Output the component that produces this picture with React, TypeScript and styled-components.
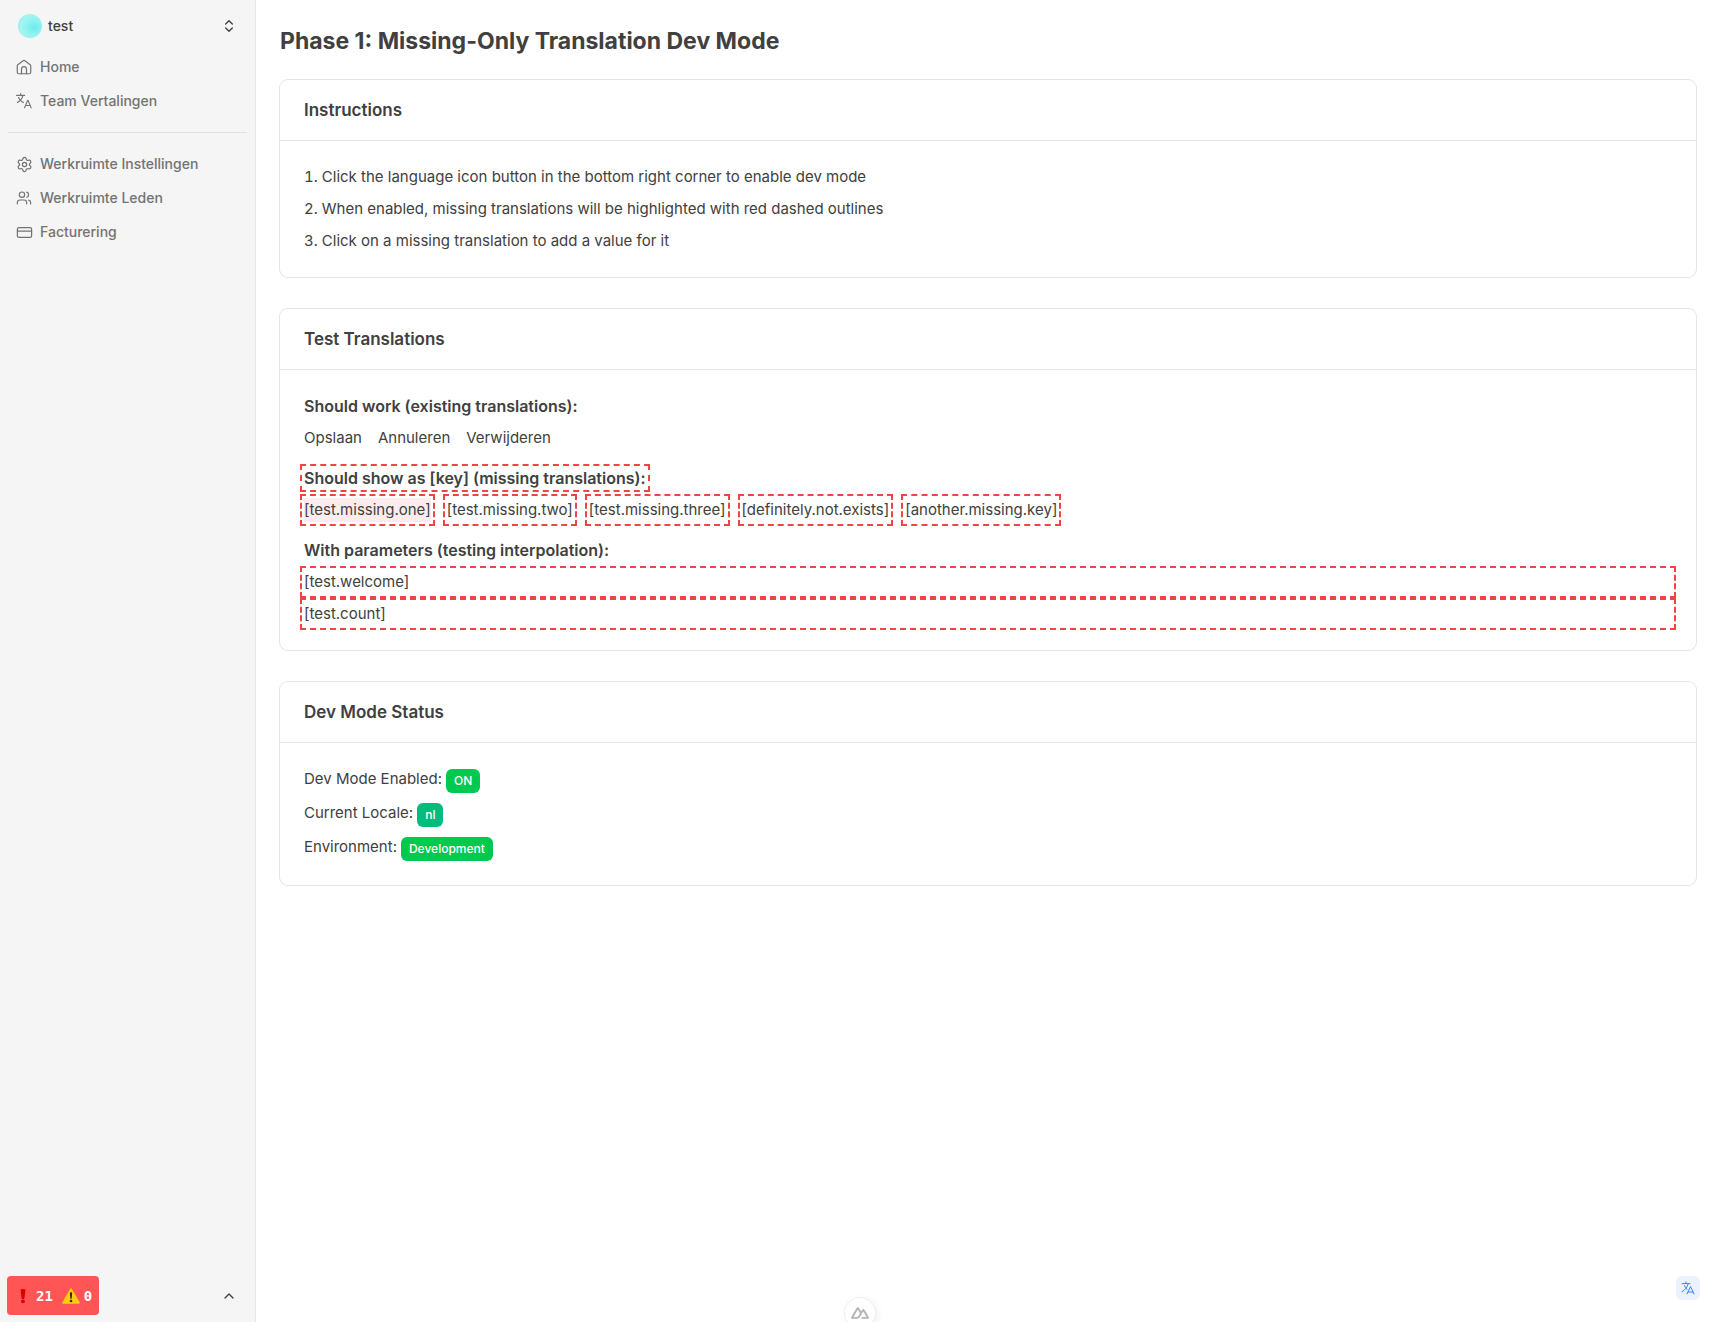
import React from "react";
import styled, { createGlobalStyle } from "styled-components";
import {
  ChevronsUpDown,
  ChevronUp,
  CreditCard,
  Settings,
  Users,
} from "lucide-react";

const sans = `Inter, "Noto Sans", "Liberation Sans", sans-serif`;

const GlobalStyle = createGlobalStyle`
  *, *::before, *::after { box-sizing: border-box; }
  body {
    margin: 0;
    background: #fff;
    color: #404040;
    font: 400 15px/24px ${sans};
    -webkit-font-smoothing: antialiased;
  }
  h1, h2, p, ol, ul { margin: 0; padding: 0; }
  button { font: inherit; color: inherit; border: 0; background: none; padding: 0; cursor: pointer; }
`;

const Shell = styled.div`
  display: flex;
  min-height: 100vh;
`;

const Sidebar = styled.aside`
  display: flex;
  flex: none;
  flex-direction: column;
  width: 256px;
  border-right: 1px solid #e5e5e5;
  background: #f5f5f5;
  font-size: 14px;
  line-height: 20px;
  font-weight: 500;
`;

const SidebarHeader = styled.div`
  padding: 8px 8px 0;
`;

const SidebarFooter = styled.div`
  margin-top: auto;
  padding: 8px;
`;

const MenuButton = styled.button`
  display: flex;
  align-items: center;
  width: 100%;
  height: 36px;
  padding: 0 10px;
  gap: 6px;
  text-align: left;

  svg { margin-left: auto; }
`;

const Avatar = styled.span`
  width: 24px;
  height: 24px;
  border-radius: 50%;
  background: radial-gradient(circle at 68% 55%, #6ceceb 0%, #8ff2f0 35%, #a5f4f2 65%, #7deeed 100%);
`;

const Nav = styled.nav`
  padding: 7px 8px 0;
`;

const NavList = styled.ul`
  display: flex;
  flex-direction: column;
  gap: 2px;
  list-style: none;

  & + & {
    margin-top: 15px;
    padding-top: 15px;
    border-top: 1px solid #e0e0e0;
  }
`;

const NavLink = styled.a`
  display: flex;
  align-items: center;
  gap: 7px;
  height: 32px;
  padding: 0 7px;
  color: #737373;
  text-decoration: none;
`;

const NavIcon = styled.span`
  display: grid;
  place-items: center;
  width: 18px;
  height: 18px;
`;

const Main = styled.main`
  flex: 1;
  min-width: 0;
  padding: 24px;
`;

const PageTitle = styled.h1`
  margin-bottom: 22px;
  font-size: 23px;
  line-height: 34px;
  font-weight: 700;
`;

const Cards = styled.div`
  display: flex;
  flex-direction: column;
  gap: 32px;
`;

const Card = styled.section`
  border-radius: 8px;
  background: #fff;
  box-shadow: 0 0 0 1px #e5e5e5;
`;

const CardHeader = styled.h2`
  padding: 16px 24px;
  font-size: 17px;
  line-height: 28px;
  font-weight: 600;
`;

const CardBody = styled.div<{ $gap?: number }>`
  display: flex;
  flex-direction: column;
  gap: ${(p) => p.$gap ?? 8}px;
  padding: 24px;
  border-top: 1px solid #e5e5e5;
`;

const Steps = styled.ol`
  display: flex;
  flex-direction: column;
  gap: 8px;
  list-style: decimal inside;
`;

const Group = styled.div`
  display: flex;
  flex-direction: column;
  gap: 8px;
`;

const Row = styled.div`
  display: flex;
  flex-wrap: wrap;
  gap: 16px;
`;

const Label = styled.p`
  font-size: 16px;
`;

const Strong = styled.strong`
  font-weight: 600;
`;

const missing = `
  outline: 2px dashed #ef4444;
  outline-offset: 2px;
  cursor: pointer;
`;

const MissingStrong = styled(Strong)`
  ${missing}
`;

const Missing = styled.span<{ $active?: boolean }>`
  ${missing}
  background: ${(p) => (p.$active ? "rgba(239, 68, 68, 0.1)" : "transparent")};
`;

const StatusRow = styled.div`
  display: flex;
  gap: 4px;
  height: 26px;
`;

const Badge = styled.span<{ $color: string }>`
  align-self: flex-end;
  padding: 4px 8px;
  border-radius: 6px;
  background: ${(p) => p.$color};
  color: #fff;
  font-size: 12px;
  line-height: 16px;
  font-weight: 500;
`;

const IssueCounter = styled.button`
  position: fixed;
  left: 7px;
  bottom: 7px;
  display: flex;
  align-items: center;
  height: 39px;
  padding: 0 7px 0 12px;
  border-radius: 4px;
  background: #ff5555;
  color: #fff;
  font: 700 14px/20px "DejaVu Sans Mono", monospace;
  gap: 9px;
`;

const Count = styled.span<{ $gap: number }>`
  display: flex;
  align-items: center;
  gap: ${(p) => p.$gap}px;
`;

const DevModeToggle = styled.button`
  position: fixed;
  right: 20px;
  bottom: 22px;
  display: grid;
  place-items: center;
  width: 24px;
  height: 24px;
  border-radius: 6px;
  background: #ebf2fe;
  color: #3b82f6;
`;

const DevtoolsHandle = styled.button`
  position: fixed;
  left: 50%;
  bottom: -6px;
  display: grid;
  place-items: center;
  width: 30px;
  height: 30px;
  margin-left: -15px;
  border-radius: 50%;
  background: #fff;
  color: #b4b4b4;
  box-shadow: 0 0 0 1px #f0f0f0, 2px 2px 8px rgba(0, 0, 0, 0.08);
`;

const HomeIcon = () => (
  <svg width="18" height="18" viewBox="0 0 24 24" fill="none" stroke="currentColor" strokeWidth="1.6" strokeLinecap="round" strokeLinejoin="round" aria-hidden="true">
    <path d="M3 10.5a2 2 0 0 1 .8-1.6l7-5.3a2 2 0 0 1 2.4 0l7 5.3a2 2 0 0 1 .8 1.6V19a2 2 0 0 1-2 2H5a2 2 0 0 1-2-2z" />
    <path d="M8.7 21v-6.2a3.3 3.3 0 0 1 6.6 0V21" />
  </svg>
);

const TranslateIcon = () => (
  <svg width="18" height="18" viewBox="0 0 32 32" fill="currentColor" aria-hidden="true">
    <path d="M27.85 29H30l-6-15h-2.35l-6 15h2.15l1.6-4h6.85zM20.2 23l2.62-6.56L25.45 23zM18 7V5h-7V2H9v3H2v2h10.74a14.71 14.71 0 0 1-3.19 6.18A13.5 13.5 0 0 1 7.26 9H5.16a16.47 16.47 0 0 0 3 5.58A16.84 16.84 0 0 1 3 18l.75 1.86A18.47 18.47 0 0 0 9.53 16a16.92 16.92 0 0 0 5.76 3.84L16 18a14.48 14.48 0 0 1-5.12-3.37A17.64 17.64 0 0 0 14.8 7z" />
  </svg>
);

const LanguageIcon = () => (
  <svg width="16" height="16" viewBox="0 0 24 24" fill="none" stroke="currentColor" strokeWidth="1.5" strokeLinecap="round" strokeLinejoin="round" aria-hidden="true">
    <path d="m10.5 21 5.25-11.25L21 21m-9-3h7.5M3 5.621a48.474 48.474 0 0 1 6-.371m0 0c1.12 0 2.233.038 3.334.114M9 5.25V3m3.334 2.364C11.176 10.658 7.69 15.08 3 17.502m9.334-12.138c.896.061 1.785.147 2.666.257m-4.589 8.495a18.023 18.023 0 0 1-3.827-5.802" />
  </svg>
);

const ExclamationIcon = () => (
  <svg width="8" height="16" viewBox="0 0 8 16" aria-hidden="true">
    <path d="M1.5 1.6Q1.5 1 4 1t2.5.6L5.4 10.6Q4 11.6 2.6 10.6Z" fill="#d90000" />
    <circle cx="4" cy="13.3" r="1.9" fill="#d90000" />
  </svg>
);

const WarningIcon = () => (
  <svg width="18" height="16" viewBox="0 0 18 16" aria-hidden="true">
    <path d="M8.1.9Q9-.4 9.9.9L17.6 14Q18.2 15.6 16.8 15.7H1.2Q-.2 15.6.4 14Z" fill="#ffcc14" />
    <path d="M7.8 4.6Q9 3.8 10.2 4.6L9.7 10.6Q9 11.2 8.3 10.6Z" fill="#3a2b05" />
    <circle cx="9" cy="13" r="1.3" fill="#3a2b05" />
  </svg>
);

const NuxtIcon = () => (
  <svg width="18" height="18" viewBox="0 0 24 24" fill="currentColor" aria-hidden="true">
    <path d="M13.464 19.83h8.922c.283 0 .562-.073.807-.21a1.6 1.6 0 0 0 .591-.574 1.53 1.53 0 0 0 .216-.783 1.53 1.53 0 0 0-.217-.782L17.792 7.414a1.6 1.6 0 0 0-.591-.573 1.65 1.65 0 0 0-.807-.21c-.283 0-.562.073-.807.21a1.6 1.6 0 0 0-.59.573L13.463 9.99 10.47 4.953a1.6 1.6 0 0 0-.591-.573 1.65 1.65 0 0 0-.807-.21c-.284 0-.562.073-.807.21a1.6 1.6 0 0 0-.591.573L.216 17.481a1.53 1.53 0 0 0 0 1.565c.142.238.346.436.59.574.246.137.525.21.808.21h5.6c2.22 0 3.856-.946 4.982-2.79l2.733-4.593 1.464-2.457 4.395 7.382h-5.859Zm-6.341-2.46-3.908-.002 5.858-9.842 2.923 4.921-1.957 3.29c-.748 1.196-1.597 1.632-2.916 1.632" />
  </svg>
);

type NavItem = { label: string; icon: React.ReactNode };

const teamItems: NavItem[] = [
  { label: "Home", icon: <HomeIcon /> },
  { label: "Team Vertalingen", icon: <TranslateIcon /> },
];

const workspaceItems: NavItem[] = [
  { label: "Werkruimte Instellingen", icon: <Settings size={17} strokeWidth={1.75} /> },
  { label: "Werkruimte Leden", icon: <Users size={16} strokeWidth={1.75} /> },
  { label: "Facturering", icon: <CreditCard size={17} strokeWidth={1.75} /> },
];

const missingKeys = [
  "test.missing.one",
  "test.missing.two",
  "test.missing.three",
  "definitely.not.exists",
  "another.missing.key",
];

const NavGroup = ({ items }: { items: NavItem[] }) => (
  <NavList>
    {items.map((item) => (
      <li key={item.label}>
        <NavLink href="#">
          <NavIcon>{item.icon}</NavIcon>
          {item.label}
        </NavLink>
      </li>
    ))}
  </NavList>
);

export default function App() {
  return (
    <>
      <GlobalStyle />
      <Shell>
        <Sidebar>
          <SidebarHeader>
            <MenuButton>
              <Avatar />
              test
              <ChevronsUpDown size={16} />
            </MenuButton>
          </SidebarHeader>
          <Nav>
            <NavGroup items={teamItems} />
            <NavGroup items={workspaceItems} />
          </Nav>
          <SidebarFooter>
            <MenuButton aria-label="Account">
              <ChevronUp size={16} />
            </MenuButton>
          </SidebarFooter>
        </Sidebar>
        <Main>
          <PageTitle>Phase 1: Missing-Only Translation Dev Mode</PageTitle>
          <Cards>
            <Card>
              <CardHeader>Instructions</CardHeader>
              <CardBody>
                <Steps>
                  <li>Click the language icon button in the bottom right corner to enable dev mode</li>
                  <li>When enabled, missing translations will be highlighted with red dashed outlines</li>
                  <li>Click on a missing translation to add a value for it</li>
                </Steps>
              </CardBody>
            </Card>
            <Card>
              <CardHeader>Test Translations</CardHeader>
              <CardBody $gap={16}>
                <Group>
                  <Label>
                    <Strong>Should work (existing translations):</Strong>
                  </Label>
                  <Row>
                    <span>Opslaan</span>
                    <span>Annuleren</span>
                    <span>Verwijderen</span>
                  </Row>
                </Group>
                <Group>
                  <Label>
                    <MissingStrong>Should show as [key] (missing translations):</MissingStrong>
                  </Label>
                  <Row>
                    {missingKeys.map((key, i) => (
                      <Missing key={key} $active={i === 0}>{`[${key}]`}</Missing>
                    ))}
                  </Row>
                </Group>
                <Group>
                  <Label>
                    <Strong>With parameters (testing interpolation):</Strong>
                  </Label>
                  <Missing as="p">[test.welcome]</Missing>
                  <Missing as="p">[test.count]</Missing>
                </Group>
              </CardBody>
            </Card>
            <Card>
              <CardHeader>Dev Mode Status</CardHeader>
              <CardBody>
                <StatusRow>
                  Dev Mode Enabled: <Badge $color="#00c950">ON</Badge>
                </StatusRow>
                <StatusRow>
                  Current Locale: <Badge $color="#00bc7d">nl</Badge>
                </StatusRow>
                <StatusRow>
                  Environment: <Badge $color="#00c950">Development</Badge>
                </StatusRow>
              </CardBody>
            </Card>
          </Cards>
        </Main>
      </Shell>
      <IssueCounter>
        <Count $gap={9}>
          <ExclamationIcon />
          21
        </Count>
        <Count $gap={4}>
          <WarningIcon />0
        </Count>
      </IssueCounter>
      <DevModeToggle aria-label="Dev mode">
        <LanguageIcon />
      </DevModeToggle>
      <DevtoolsHandle aria-label="Nuxt DevTools">
        <NuxtIcon />
      </DevtoolsHandle>
    </>
  );
}
